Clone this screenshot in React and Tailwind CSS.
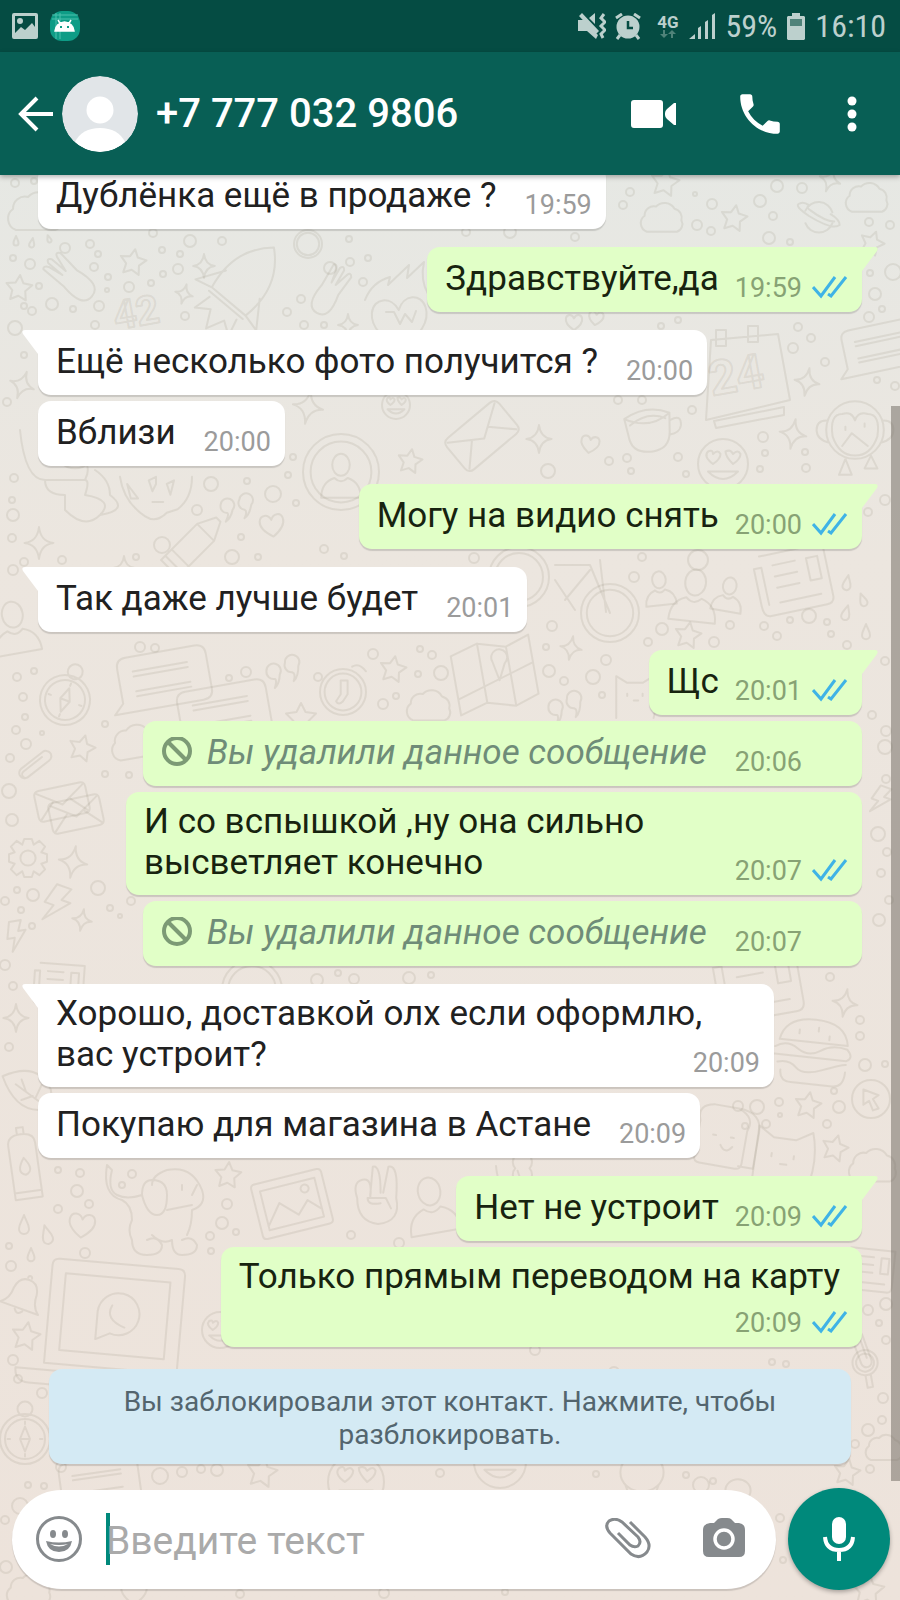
import React from 'react';
import clsx from 'clsx';

const MESSAGES = [
  { text: 'Дублёнка ещё в продаже ?', time: '19:59' },
  { text: 'Здравствуйте,да', time: '19:59', out: true, read: true, first: true },
  { text: 'Ещё несколько фото получится ?', time: '20:00', first: true },
  { text: 'Вблизи', time: '20:00' },
  { text: 'Могу на видио снять', time: '20:00', out: true, read: true, first: true },
  { text: 'Так даже лучше будет', time: '20:01', first: true },
  { text: 'Щс', time: '20:01', out: true, read: true, first: true },
  { text: 'Вы удалили данное сообщение', time: '20:06', out: true, deleted: true },
  { text: 'И со вспышкой ,ну она сильно высветляет конечно', time: '20:07', out: true, read: true, layout: 'two' },
  { text: 'Вы удалили данное сообщение', time: '20:07', out: true, deleted: true },
  { text: 'Хорошо, доставкой олх если оформлю, вас устроит?', time: '20:09', first: true, layout: 'float' },
  { text: 'Покупаю для магазина в Астане', time: '20:09' },
  { text: 'Нет не устроит', time: '20:09', out: true, read: true, first: true },
  { text: 'Только прямым переводом на карту', time: '20:09', out: true, read: true, layout: 'below' },
];

// Wallpaper doodles: [shape, x, y, size, rotation]
const DOODLES = [
  ['cloud', 37, 212, 30, 0], ['drop', 16, 241, 5, 0], ['drop', 32, 243, 5, 10], ['drop', 49, 239, 4, -20],
  ['star', 133, 262, 13, 10], ['star', 19, 288, 13, 5], ['sparkle', 204, 266, 12, 0], ['sparkle', 184, 294, 10, 15],
  ['sparkle', 348, 325, 11, 0], ['sparkle', 22, 385, 14, 20], ['sparkle', 308, 407, 17, 10], ['star', 410, 461, 12, 10],
  ['star', 665, 182, 14, 10], ['cloud', 663, 218, 23, 0], ['cloud', 868, 198, 23, 0], ['planet', 818, 216, 18, 0],
  ['star', 734, 218, 13, 10], ['star', 872, 243, 12, 20], ['sparkle', 830, 180, 12, 20], ['sparkle', 807, 382, 14, 10],
  ['sparkle', 539, 439, 14, 0], ['sparkle', 793, 434, 15, 10], ['face', 723, 464, 25, 0], ['chat', 878, 350, 42, -12],
  ['cup', 650, 430, 24, -8], ['heart', 590, 444, 10, 10], ['heart', 400, 322, 30, -6], ['heart', 272, 525, 13, -8],
  ['quotes', 236, 508, 17, 0], ['sparkle', 39, 543, 16, 0], ['crayon', 195, 543, 30, -45], ['sparkle', 124, 568, 12, 0],
  ['person', 15, 630, 26, -10], ['compass', 65, 700, 25, 20], ['chat', 160, 682, 50, -10], ['chat', 220, 716, 50, -10],
  ['quotes', 283, 672, 18, -10], ['clock', 343, 692, 23, 0], ['star', 393, 669, 13, 10], ['star', 301, 718, 15, 0],
  ['cloud', 430, 706, 24, 0], ['star', 82, 748, 13, 15], ['cloud', 136, 742, 26, -10], ['clip', 36, 764, 18, -38],
  ['mail', 62, 802, 26, -12], ['mail', 76, 814, 26, -12], ['gear', 28, 858, 19, 0], ['sparkle', 73, 862, 16, 10],
  ['sparkle', 82, 920, 11, 10], ['bolt', 16, 936, 15, -10], ['bolt', 56, 904, 19, 20], ['wheel', 610, 613, 29, 0],
  ['wheel', 519, 577, 30, 0], ['person', 694, 598, 26, 6], ['person', 660, 590, 17, -6], ['person', 728, 596, 17, 10],
  ['news', 795, 580, 38, -12], ['map', 495, 677, 40, -10], ['drop', 847, 583, 8, 10], ['drop', 863, 600, 7, -20],
  ['drop', 846, 613, 8, 15], ['drop', 866, 632, 8, 0], ['sparkle', 571, 648, 12, 10], ['star', 688, 635, 13, 10],
  ['quotes', 565, 708, 18, -10], ['bolt', 880, 800, 14, 20], ['cat', 636, 696, 22, 0], ['news', 60, 985, 26, 4],
  ['wheel', 252, 990, 30, 0], ['sparkle', 16, 1018, 14, 0], ['leaf', 28, 1090, 24, -20], ['bottle', 25, 1168, 34, -8],
  ['dog', 152, 1210, 50, 0], ['star', 228, 1175, 13, 5], ['photo', 292, 1204, 40, -14], ['hand', 378, 1198, 26, 0],
  ['person', 432, 1208, 28, -10], ['heart', 82, 1225, 14, 6], ['drop', 24, 1225, 10, 0], ['drop', 47, 1235, 10, -15],
  ['drop', 31, 1255, 7, 0], ['bell', 24, 1295, 20, 20], ['star', 26, 1336, 14, 10], ['laptop', 118, 1320, 70, 5],
  ['burger', 813, 1050, 38, 6], ['sparkle', 845, 1003, 14, 10], ['arrow', 871, 1099, 19, 0], ['star', 808, 1105, 13, 10],
  ['star', 835, 1148, 13, 15], ['cat', 784, 1158, 32, 8], ['cloud', 874, 1166, 26, 0], ['toast', 722, 1136, 30, 10],
  ['news', 870, 1270, 26, 6], ['news', 760, 982, 44, -10], ['face', 220, 1330, 18, 0], ['compass', 25, 1439, 25, 0],
  ['chat', 96, 1486, 44, -8], ['star', 262, 1472, 15, 10], ['face', 356, 1482, 28, 0], ['glass', 866, 1368, 18, -10],
  ['star', 847, 1472, 13, 10], ['cloud', 885, 1448, 20, 0], ['clip', 862, 1350, 18, 70], ['cloud', 30, 1590, 24, 0],
  ['face', 500, 1462, 26, 0], ['balloon', 642, 1482, 24, 0], ['balloon', 738, 1496, 14, 0], ['heart', 134, 1592, 14, 0],
  ['star', 868, 1590, 16, 5], ['fork', 70, 278, 26, -50], ['fork', 330, 290, 24, 30], ['wheel', 308, 244, 14, 0],
  ['rocket', 240, 288, 44, 40], ['wheel', 341, 472, 38, 0], ['person', 341, 478, 22, 0], ['monkey', 855, 430, 32, 0],
  ['teddy', 70, 480, 50, 0], ['cookie', 156, 484, 36, 0], ['mail', 482, 436, 34, -40], ['heart', 574, 322, 9, 0],
  ['heart', 596, 318, 8, 10], ['face', 396, 405, 14, 0], ['teddy', 520, 1190, 24, 0], ['bolt', 400, 1385, 12, 20],
];

// [x, y, r]
const DOTS = [
  [15, 183, 4], [34, 181, 3], [153, 233, 4], [190, 241, 6], [222, 241, 4], [65, 248, 5], [90, 244, 4], [13, 258, 3],
  [30, 264, 5], [98, 254, 3], [94, 267, 4], [162, 250, 3], [180, 254, 3], [178, 269, 5], [163, 274, 3], [108, 277, 3],
  [129, 287, 5], [151, 283, 3], [39, 286, 3], [107, 290, 2], [52, 304, 6], [73, 309, 3], [99, 306, 5], [24, 306, 3],
  [32, 311, 4], [95, 325, 4], [15, 328, 7], [185, 316, 4], [330, 268, 6], [350, 262, 4], [368, 258, 3], [363, 282, 4],
  [301, 299, 4], [287, 312, 4], [304, 325, 4], [324, 325, 3], [349, 239, 3], [24, 355, 3], [7, 402, 4], [14, 478, 4],
  [293, 457, 3], [288, 475, 3], [12, 500, 3], [13, 515, 6], [12, 538, 4], [24, 562, 4], [62, 560, 4], [211, 484, 7],
  [247, 481, 3], [197, 510, 5], [273, 494, 8], [296, 503, 3], [162, 545, 8], [136, 557, 3], [232, 557, 7],
  [241, 537, 3], [258, 557, 3], [324, 549, 4], [344, 556, 3], [630, 192, 4], [623, 205, 4], [695, 194, 2], [712, 204, 5],
  [760, 201, 6], [777, 186, 6], [802, 188, 5], [773, 216, 4], [697, 225, 5], [711, 231, 4], [769, 238, 6], [790, 242, 3],
  [869, 222, 4], [890, 225, 4], [510, 232, 6], [466, 232, 4], [575, 237, 4], [893, 272, 8], [875, 294, 6], [869, 317, 5],
  [882, 309, 3], [870, 273, 3], [661, 326, 3], [678, 320, 3], [798, 327, 4], [811, 338, 4], [793, 348, 5], [825, 362, 4],
  [895, 386, 4], [877, 380, 3], [692, 410, 4], [618, 400, 4], [642, 400, 4], [627, 458, 4], [609, 461, 4], [548, 471, 7],
  [631, 471, 3], [678, 457, 4], [686, 474, 3], [763, 437, 5], [765, 453, 3], [805, 452, 3], [806, 468, 4], [760, 469, 3],
  [885, 500, 5], [868, 512, 4], [642, 557, 4], [698, 560, 10], [474, 558, 5], [13, 570, 5], [140, 647, 5], [155, 648, 4],
  [17, 677, 4], [34, 671, 3], [23, 697, 4], [25, 717, 3], [16, 730, 4], [26, 744, 5], [42, 733, 2], [10, 758, 4],
  [105, 724, 3], [105, 774, 3], [129, 775, 3], [9, 791, 7], [12, 820, 6], [229, 678, 3], [246, 672, 5], [373, 654, 5],
  [420, 649, 3], [432, 655, 4], [418, 674, 3], [441, 673, 7], [383, 704, 5], [396, 696, 3], [318, 677, 4], [552, 626, 5],
  [662, 629, 6], [648, 642, 4], [714, 642, 5], [730, 625, 4], [764, 626, 4], [790, 620, 3], [777, 636, 4], [809, 616, 7],
  [827, 622, 3], [831, 634, 3], [847, 645, 4], [546, 647, 3], [606, 660, 5], [549, 671, 6], [564, 681, 4], [593, 677, 7],
  [602, 695, 3], [634, 577, 5], [885, 661, 4], [872, 715, 4], [886, 731, 5], [885, 747, 7], [886, 779, 4], [878, 834, 7],
  [887, 852, 4], [881, 873, 4], [889, 900, 4], [879, 920, 6], [17, 890, 3], [33, 895, 6], [5, 901, 4], [21, 910, 3],
  [32, 926, 3], [98, 888, 7], [110, 908, 3], [131, 901, 4], [120, 916, 2], [13, 986, 4], [5, 965, 5], [317, 980, 6],
  [338, 973, 3], [354, 979, 5], [409, 978, 6], [431, 975, 3], [9, 1047, 4], [58, 1170, 3], [80, 1173, 4], [77, 1191, 6],
  [58, 1209, 4], [89, 1204, 4], [132, 1174, 4], [122, 1185, 3], [227, 1204, 5], [222, 1223, 6], [236, 1232, 3],
  [210, 1236, 4], [211, 1251, 3], [85, 1253, 5], [9, 1246, 3], [11, 1266, 5], [351, 1235, 4], [399, 1243, 5],
  [13, 1360, 5], [18, 1379, 4], [42, 1393, 5], [830, 977, 4], [860, 1020, 4], [860, 1036, 4], [865, 1065, 6],
  [885, 1064, 3], [738, 1106, 5], [757, 1107, 7], [779, 1102, 4], [780, 1115, 2], [834, 1091, 3], [839, 1107, 6],
  [745, 1126, 3], [766, 1124, 4], [827, 1124, 4], [868, 1310, 5], [879, 1323, 3], [886, 1304, 6], [886, 1340, 4],
  [160, 1476, 8], [182, 1472, 5], [201, 1469, 4], [217, 1470, 6], [440, 1473, 4], [28, 1485, 3], [44, 1486, 3],
  [61, 1467, 5], [5, 1520, 4], [6, 1567, 6], [20, 1506, 8], [596, 1474, 3], [686, 1475, 3], [701, 1485, 8], [713, 1481, 3],
  [870, 1469, 4], [882, 1420, 4], [868, 1430, 6], [883, 1398, 5], [855, 1444, 4], [780, 1518, 4], [783, 1560, 3],
  [240, 1594, 4], [384, 1593, 5], [505, 1592, 3], [614, 1372, 5], [535, 1350, 5], [772, 1362, 3], [786, 1364, 3],
];

const SHAPES = {
  star: 'M0-10 3-4 10-3 5 2 6 9 0 6-6 9-5 2-10-3-3-4Z',
  sparkle: 'M0-10Q1-1 9 0 1 1 0 10-1 1-9 0-1-1 0-10Z',
  drop: 'M0-10C2-4 5-1 5 4A5 5 0 0 1-5 4C-5-1-2-4 0-10Z',
  cloud: 'M-7 6A4 4 0 0 1-8-1 4 4 0 0 1-3-5 5 5 0 0 1 5-4 4 4 0 0 1 8 1 3.500 3.500 0 0 1 6 6Z',
  heart: 'M0 9C-6 5-10 1-9-4-8-9-2-9 0-4 2-9 8-9 9-4 10 1 6 5 0 9Z',
  bolt: 'M-3-10H5L2-3H7L-4 10-1 1H-6Z',
  chat: 'M-10 5 -8 3V-4Q-8-6-6-6H8Q10-6 10-4V3Q10 5 8 5ZM-5-3H6M-5 2H6M-5-2H6M-5 1H6',
  quotes: 'M-9-2A4 4 0 1 1-2 1Q-3 6-6 8-4 4-5 3A4 4 0 0 1-9-2ZM2-5A4 4 0 1 1 9-2Q8 4 5 6 7 2 5 1A4 4 0 0 1 2-5Z',
  planet: 'M-7-3A8 8 0 0 1 8-2M8 4A8 8 0 0 1-7 4M-10-7Q-14-6-5 0 8 8 12 5 12 2 7-1M-10-7Q-8-8-5-6-7-5-4-3 4 3 9 3',
  face: 'M10 0A10 10 0 1 1-10 0 10 10 0 1 1 10 0ZM-6 3Q0 9 6 3ZM-4 0Q-8-3-6-5-4-6-4-4-2-6-1-4-1-2-4 0ZM4 0Q1-3 1-5 3-6 4-4 6-6 7-4 7-2 4 0Z',
  cup: 'M-10-6Q0-11 9-6L8 2Q7 9 0 9-8 9-9 3ZM9-3Q14-5 13 0 12 3 8 3M-10-6Q0 0 9-6M-8-3Q0-8 7-4',
  crayon: 'M-10-4H5L11-1V1L5 4H-10ZM-7-4V4M5-4V4M-12-4H-10V4H-12Z',
  person: 'M4-6A4 5 0 1 1-4-6 4 5 0 1 1 4-6ZM-3 0Q-9 2-9 9H9Q9 2 3 0Q0 3-3 0Z',
  compass: 'M10 0A10 10 0 1 1-10 0 10 10 0 1 1 10 0ZM8 0A8 8 0 1 1-8 0 8 8 0 1 1 8 0ZM0-5 2 0 0 5-2 0ZM-2 0H2M3-12A3 3 0 1 1-3-12 3 3 0 1 1 3-12ZM0-7V-6M0 6V7M-7 0H-6M6 0H7',
  clock: 'M10 0A10 10 0 1 1-10 0 10 10 0 1 1 10 0ZM8 0A8 8 0 1 1-8 0 8 8 0 1 1 8 0ZM-1-5V1L-3 4Q-2 6 0 4L2 1V-5ZM4-11Q7-13 10-9',
  clip: 'M-8-3H7A3 3 0 0 1 7 3H-8A2 2 0 0 1-8-1H5M-8-3A3 3 0 0 0-8 3',
  mail: 'M-8-6H8Q10-6 10-4V4Q10 6 8 6H-8Q-10 6-10 4V-4Q-10-6-8-6ZM-9-5 0 1 9-5M-9 5-3-1M9 5 3-1',
  gear: 'M-2-10H2L3-7 6-9 9-6 7-3 10-2V2L7 3 9 6 6 9 3 7 2 10H-2L-3 7-6 9-9 6-7 3-10 2V-2L-7-3-9-6-6-9-3-7ZM4 0A4 4 0 1 1-4 0 4 4 0 1 1 4 0Z',
  wheel: 'M10 0A10 10 0 1 1-10 0 10 10 0 1 1 10 0ZM8 0A8 8 0 1 1-8 0 8 8 0 1 1 8 0Z',
  news: 'M-8-8H9V6Q9 8 7 8H-8Q-10 8-10 5V-5H-8V5M-5-5H1M-5-2H1M-5 1H1M4-5H7V1H4ZM-5 5H6',
  map: 'M-10-7-3-9 4-7 10-9V6L4 8-3 6-10 8ZM-3-9V6M4-7V8M-10 4 10-2M0-4A2 2 0 1 1 3-3L1 1Z',
  cat: 'M-9 10V-9L-4-6H3L8-9Q11 0 8 10M-4-1V0M3-1V0M-1 2H1',
  leaf: 'M-8-9Q8-10 9 3 8 9 4 10-8 8-8-9ZM-4-4 4 8M-1 0V-5M1 3H-4M2 4 6 0',
  bottle: 'M-4-7Q-4-10 0-10T4-7V9H-4ZM-4 7H4M-1-10V-12H1V-10M0-3Q3 1 0 2-3 1 0-3Z',
  dog: 'M-9-9Q-10-3-6-2-4-1-4 2-5 4-4 6-4 9-1 9 2 9 2 7 1 5-1 6M0 5Q2 7 4 6 4 9 6 9 9 9 9 7 8 5 6 6M7 5Q8 3 8 0M-9-9-8-8Q-9-4-7-3-5-2-2-3M8 0Q11-1 10-4 8-9 3-8 0-7 0-5M-2-3Q-2-6 0-6 3-6 3-3 3 1 1 1-1 1-2-3ZM3 0 8-1M6-5V-4M9-5 8-3',
  photo: 'M-8-7H8Q9-7 9-6V6Q9 7 8 7H-8Q-9 7-9 6V-6Q-9-7-8-7ZM-7-5H7V5H-7ZM-7 4-3-1 1 3 4 0 7 3M5-3A1 1 0 1 1 3-3 1 1 0 1 1 5-3Z',
  hand: 'M-8 0Q-10-6-6-7T-3 0M-3-1-2-12Q1-13 1-2M2-2 4-12Q8-13 7 0 9 9 0 10-8 9-8 0M-4 0H3L5 4M-4 0Q-4 3 1 2',
  bell: 'M-10 7Q-6 4-6-2 -5-8 0-8T6-2Q6 4 10 7ZM-2 8Q0 11 2 8M-1-9A1 1 0 1 1 1-9',
  laptop: 'M-9-8H8Q9-8 9-7V7H-10V-7Q-10-8-9-8ZM-8-6H7V5H-8ZM-3-1A3 3 0 1 1-1 2L-3 3ZM-1-2Q-2 0 1 1M-14 8H12Q12 10 10 10H-12Q-14 10-14 8Z',
  burger: 'M-9-2Q-8-8 0-8T9-2ZM-10 0Q-7-2-4 0T2 0 9-1M-10 2H9Q11 1 9-1M-9 4Q-6 3-4 5T3 5 9 3M-8 6Q-8 9-5 9H6Q9 9 9 5M-4-5V-4M1-6V-5M4-4V-3',
  arrow: 'M10 0A10 10 0 1 1-10 0 10 10 0 1 1 10 0ZM-4-5 4-2 1 0 4 5 1 6-1 1-4 3Z',
  toast: 'M-8 8V-4Q-10-9-4-10H4Q10-8 8-3V8Q8 10 6 10H-6Q-8 10-8 8ZM4-10Q12-10 12-3V9H7M-3 0H-2M3 0H4M0 3Q2 6 4 3',
  glass: 'M7-3A7 7 0 1 1-7-3 7 7 0 1 1 7-3ZM5-3A5 5 0 1 1-5-3 5 5 0 1 1 5-3ZM-1 4V11H2V4',
  balloon: 'M9-4A9 8 0 1 1-9-4 9 8 0 1 1 9-4ZM-7 1-3 12H3L7 1M-3 4-1 12',
  fork: 'M-4-10Q-3-11-2-9L-1-3V-10Q0-12 1-10V-3L3-9Q4-11 5-9L4 0Q6 11 0 11T-4 0Z',
  rocket: 'M0-12Q7-6 5 4H-5Q-7-6 0-12ZM-5-1-9 5-5 4M5-1 9 5 5 4M-5 5H5M-4 6-5 10-2 8 0 12 2 8 5 10 4 6',
  monkey: 'M9 0A9 9 0 1 1-9 0 9 9 0 1 1 9 0ZM-7 2Q-8-5-4-5-1-6 0-3 1-6 4-5 8-5 7 2 5 8 0 8T-7 2ZM-9-3Q-12-3-12 0T-8 4M9-3Q12-3 12 0T8 4M-3-1V0M3-2V-1M-4 5-1 1 4 5M-3 9-5 14H-1ZM5 8 3 12 7 12Z',
  teddy: 'M-10-10Q-9 0-5 0H3Q5-4 0-5L-1-8M-5 0Q-5 3-1 3V6Q3 10 6 7T3 3Q4 0 3 0M5-2Q8 0 8 3 12 6 6 7M4-9A4 4 0 1 1-2-9 4 4 0 1 1 4-9Z',
  cookie: 'M10-2Q10 4 6 7L3 8Q0 11-3 9-9 5-10-2M-8 0-5 4-7 4ZM-2-1 0-2V0L-1 2ZM3 0 5-1 4 3ZM-1 5H2',
};

const Wallpaper = () => (
  <svg
    aria-hidden="true"
    className="absolute inset-0 h-full w-full"
    viewBox="0 0 900 1600"
    preserveAspectRatio="xMidYMin slice"
    fill="none"
    stroke="#8a7f6c"
    strokeOpacity="0.14"
    strokeWidth="2"
    strokeLinejoin="round"
    strokeLinecap="round"
  >
    {DOODLES.map(([shape, x, y, size, rot], i) => (
      <path
        key={i}
        d={SHAPES[shape]}
        transform={`translate(${x} ${y}) rotate(${rot}) scale(${size / 10})`}
        vectorEffect="non-scaling-stroke"
      />
    ))}
    {DOTS.map(([x, y, r], i) => (
      <circle key={i} cx={x} cy={y} r={r} />
    ))}
    <path d="M711 340 778 334 790 400 706 420ZM714 421 784 407V415L716 428ZM716 330H726V346H716ZM748 326H758V342H748Z" />
    <path d="M386 312H394L400 324 405 314 412 322 416 311M365 300Q372 282 390 277L388 285 409 265 407 278 424 262Q420 280 428 294" />
    <path d="M555 580 575 610M555 565 590 565 610 613M600 560 606 612M590 570 565 600" />
    <text x="116" y="330" fontSize="40" fontWeight="bold" transform="rotate(-10 116 330)">42</text>
    <text x="712" y="396" fontSize="48" fontWeight="bold" transform="rotate(-10 712 396)">24</text>
  </svg>
);

const Ticks = () => (
  <svg viewBox="0 0 36 24" className="mb-1 h-6 w-9 shrink-0" role="img" aria-label="Прочитано" fill="none" stroke="#3fb3e6" strokeWidth="3">
    <path d="M1 12 9 21 23 2" />
    <path d="M16 19 19 21 34 2" />
  </svg>
);

const Tail = ({ out }) => (
  <svg
    aria-hidden="true"
    viewBox="0 0 17 26"
    className={clsx('absolute top-0 h-[26px] w-[17px]', out ? '-right-4 -scale-x-100 text-[#e1ffc7]' : '-left-4 text-white')}
  >
    <path d="M17 0H3Q-1 0 1 4L16 24Q17 25 17 26Z" fill="currentColor" />
  </svg>
);

const Meta = ({ time, out, read }) => (
  <div className={clsx('flex shrink-0 items-end gap-[10px] pb-[9px] text-[27px] leading-[30px]', out ? 'text-[#87a274]' : 'text-[#9b9b9b]')}>
    <time>{time}</time>
    {read && <Ticks />}
    {out && !read && <span className="w-9" />}
  </div>
);

const BubbleBody = ({ text, deleted, layout, ...meta }) => {
  // The time floats into the free end of the last line
  if (layout === 'float') {
    return (
      <div className="flow-root w-full pt-[9px]">
        <span>{text}</span>
        <div className="float-right mt-[14px]">
          <Meta {...meta} />
        </div>
      </div>
    );
  }

  if (deleted) {
    return (
      <>
        <p className="flex items-center gap-[14px] pt-[11px] pb-[13px] italic text-[#6f8c78]">
          <svg viewBox="0 0 32 32" className="h-8 w-8 shrink-0" aria-hidden="true" fill="none" stroke="#7c9a75" strokeWidth="4">
            <circle cx="16" cy="14" r="13" />
            <path d="M7 5 25 23" />
          </svg>
          {text}
        </p>
        <Meta {...meta} />
      </>
    );
  }

  return (
    <>
      <p
        className={clsx(
          !layout && 'pt-[11px] pb-[13px]',
          layout === 'two' && 'pt-[9px] pb-3',
          layout === 'below' && 'pt-[9px] pr-2 pb-[11px]'
        )}
      >
        {text}
      </p>
      <Meta {...meta} />
    </>
  );
};

const Bubble = ({ first, ...message }) => {
  const { out, deleted, layout } = message;
  return (
    <li
      className={clsx(
        'relative flex max-w-[736px] items-end rounded-[13px] pr-[14px] pl-[18px] text-[35px] leading-[41px] shadow-[0_2px_1px_rgba(0,0,0,0.14)]',
        out ? 'self-end bg-[#e1ffc7] text-[#17230f]' : 'self-start bg-white text-[#212121]',
        first ? 'mt-[18px]' : 'mt-[6px]',
        first && (out ? 'rounded-tr-none' : 'rounded-tl-none'),
        layout === 'below' ? 'flex-col' : out && !deleted ? 'gap-4' : 'gap-7'
      )}
    >
      {first && <Tail out={out} />}
      <BubbleBody {...message} />
    </li>
  );
};

const StatusBar = () => (
  <div className="relative flex h-[52px] items-center bg-[#054c43] pr-[14px] pl-3 text-[#bcd0cd]">
    <svg viewBox="0 0 26 26" className="h-[26px] w-[26px]" aria-hidden="true">
      <path fillRule="evenodd" fill="currentColor" d="M2 0H24Q26 0 26 2V24Q26 26 24 26H2Q0 26 0 24V2Q0 0 2 0ZM3 3V20L9 14 13 17 20 10 23 14V3ZM8 5A3 3 0 1 1 8 11 3 3 0 1 1 8 5Z" />
    </svg>
    <svg viewBox="0 0 30 30" className="ml-3 h-[30px] w-[30px]" aria-hidden="true">
      <rect width="30" height="30" rx="12" fill="#0e9c86" />
      <path d="M2 4H28M2 8H28M6 2V28M10 2V28" stroke="#4dc0ad" strokeWidth="1" />
      <path d="M5 20Q6 12 14.500 11 23 12 24 20ZM8 9 11 14M21 9 18 14" fill="#fff" stroke="#fff" strokeWidth="1.500" />
      <path d="M10 15H12V17H10ZM17 15H19V17H17Z" fill="#0e9c86" />
    </svg>
    <div className="ml-auto flex items-center">
      <svg viewBox="0 0 28 26" className="h-[26px] w-7" aria-hidden="true" fill="currentColor">
        <path d="M0 7H5L20 22 18 26 9 18H0ZM11 5 17 0V11ZM1 3 4 0 21 18 18 21Z" />
        <path d="M26 1 23 5 27 9 23 13 27 17 23 21 25 25" fill="none" stroke="currentColor" strokeWidth="3" />
      </svg>
      <svg viewBox="0 0 26 27" className="ml-[9px] h-[27px] w-[26px]" aria-hidden="true">
        <circle cx="13" cy="14" r="11.500" fill="currentColor" />
        <path d="M1 5 7 1M25 5 19 1M5 22 2 26M21 22 24 26" stroke="currentColor" strokeWidth="3" />
        <path d="M13 8V15H18" fill="none" stroke="#054c43" strokeWidth="2.500" />
      </svg>
      <div className="ml-4 flex flex-col items-center">
        <span className="text-[17px] leading-4 font-bold">4G</span>
        <svg viewBox="0 0 16 8" className="h-2 w-4" aria-hidden="true" fill="#4f8279">
          <path d="M3 0H5V4H8L4 8 0 4H3ZM11 8H13V4H16L12 0 8 4H11Z" />
        </svg>
      </div>
      <svg viewBox="0 0 27 26" className="ml-[10px] h-[26px] w-[27px]" aria-hidden="true" fill="currentColor">
        <path d="M0 26 6 21V26ZM9 15 12 13V26H9ZM16 9 19 7V26H16ZM23 2 26 0V26H23Z" />
      </svg>
      <span className="ml-[10px] font-['Roboto_Condensed','Liberation_Sans_Narrow',Roboto,sans-serif] text-[32px] leading-[38px]">59%</span>
      <svg viewBox="0 0 18 27" className="ml-[10px] h-[27px] w-[18px]" aria-hidden="true">
        <path d="M5 0H13V3H17L18 4V26L17 27H1L0 26V4L1 3H5Z" fill="currentColor" />
        <path d="M3 6H15V13H3Z" fill="#4f8279" />
      </svg>
      <span className="ml-[10px] font-['Roboto_Condensed','Liberation_Sans_Narrow',Roboto,sans-serif] text-[32px] leading-[38px]">16:10</span>
    </div>
  </div>
);

const ChatHeader = () => (
  <header className="relative z-10 flex h-[123px] items-center bg-[#085f55] pr-[38px] pl-[17px] text-white shadow-[0_2px_5px_rgba(0,0,0,0.3)]">
    <button type="button" aria-label="Назад">
      <svg viewBox="0 0 38 36" className="h-9 w-[38px]" fill="none" stroke="currentColor" strokeWidth="4">
        <path d="M36 18H4M20 2 4 18 20 34" />
      </svg>
    </button>
    <svg viewBox="0 0 76 76" className="ml-[7px] h-[76px] w-[76px] rounded-full" role="img" aria-label="Фото контакта">
      <circle cx="38" cy="38" r="38" fill="#e1e5e8" />
      <circle cx="38" cy="34" r="13.500" fill="#fff" />
      <path d="M13 66Q20 52 38 52T63 66Q52 76 38 76T13 66Z" fill="#fff" />
    </svg>
    <h1 className="ml-[18px] text-[40px] leading-[48px] font-medium whitespace-nowrap">+7 777 032 9806</h1>
    <div className="ml-auto flex items-center gap-[60px]">
      <button type="button" aria-label="Видеозвонок">
        <svg viewBox="0 0 48 28" className="h-7 w-12" fill="currentColor">
          <path d="M4 0H30Q33 0 33 3V25Q33 28 30 28H4Q1 28 1 25V3Q1 0 4 0ZM35 13Q35 11 37 9L44 3H46V25H44L37 19Q35 17 35 15Z" />
        </svg>
      </button>
      <button type="button" aria-label="Позвонить">
        <svg viewBox="2 2 20 20" className="h-11 w-11" fill="currentColor">
          <path d="M6.620 10.790c1.440 2.830 3.760 5.140 6.590 6.590l2.200-2.200c.27-.27.67-.36 1.020-.24 1.120.37 2.330.57 3.570.57.55 0 1 .45 1 1V20c0 .55-.45 1-1 1-9.390 0-17-7.610-17-17 0-.55.45-1 1-1h3.500c.55 0 1 .45 1 1 0 1.250.2 2.450.57 3.570.11.35.03.74-.25 1.020l-2.200 2.200z" />
        </svg>
      </button>
      <button type="button" aria-label="Ещё">
        <svg viewBox="0 0 20 38" className="h-[38px] w-5" fill="currentColor">
          <circle cx="10" cy="6" r="4.500" />
          <circle cx="10" cy="19" r="4.500" />
          <circle cx="10" cy="32" r="4.500" />
        </svg>
      </button>
    </div>
  </header>
);

const Composer = () => (
  <form className="relative flex items-center gap-3 pt-[7px] pr-[10px] pb-[10px] pl-3" onSubmit={(e) => e.preventDefault()}>
    <div className="flex h-[99px] min-w-0 flex-1 items-center rounded-full bg-white pr-[30px] pl-[23px] shadow-[0_2px_1px_rgba(0,0,0,0.14)]">
      <button type="button" aria-label="Эмодзи" className="shrink-0 text-[#868a8d]">
        <svg viewBox="0 0 48 48" className="h-12 w-12">
          <circle cx="24" cy="24" r="21.500" fill="none" stroke="currentColor" strokeWidth="3" />
          <ellipse cx="18" cy="19" rx="3" ry="4" fill="currentColor" />
          <ellipse cx="30" cy="19" rx="3" ry="4" fill="currentColor" />
          <path fillRule="evenodd" d="M11 26Q24 29 37 26 35 37 24 37T11 26ZM15 29Q24 34 33 29 24 31 15 29Z" fill="currentColor" />
        </svg>
      </button>
      <span className="ml-[23px] h-[52px] w-1 shrink-0 bg-[#00897b]" />
      <input
        type="text"
        aria-label="Введите текст"
        placeholder="Введите текст"
        className="-ml-1 h-[60px] min-w-0 flex-1 bg-transparent pt-1 text-[39px] text-[#212121] outline-none placeholder:text-[#aaaaaa]"
      />
      <button type="button" aria-label="Прикрепить" className="shrink-0 text-[#868a8d]">
        <svg viewBox="0 0 46 42" className="h-[42px] w-[46px]" fill="none" stroke="currentColor" strokeWidth="3" strokeLinecap="butt">
          <path d="M25 4 40 19Q47 27 42 34 35 42 26 36L5 15Q-1 8 4 3 10-1 17 4L33 19Q37 24 33 28 29 30 25 27L13 15" />
        </svg>
      </button>
      <button type="button" aria-label="Камера" className="ml-[51px] shrink-0">
        <svg viewBox="0 0 44 44" className="h-11 w-11">
          <path d="M8 6H12L16 2Q18 1 20 1H25Q28 1 29 2L33 6H37Q43 7 43 13V34Q43 40 37 40H7Q1 40 1 34V13Q1 7 8 6Z" fill="#868a8d" />
          <circle cx="22" cy="22" r="9" fill="none" stroke="#fff" strokeWidth="3.500" />
        </svg>
      </button>
    </div>
    <button type="button" aria-label="Голосовое сообщение" className="flex h-[102px] w-[102px] shrink-0 items-center justify-center rounded-full bg-[#00897b] text-white shadow-[0_2px_4px_rgba(0,0,0,0.3)]">
      <svg viewBox="0 0 34 46" className="h-[46px] w-[34px]">
        <rect x="10" y="1" width="14" height="27" rx="7" fill="currentColor" />
        <path d="M3 21Q4 34 17 34T31 21M17 34V45" fill="none" stroke="currentColor" strokeWidth="4" />
      </svg>
    </button>
  </form>
);

const App = () => (
  <div className="relative flex min-h-screen flex-col overflow-hidden bg-gradient-to-b from-[#e6e8e4] from-10% via-[#ece6df] via-35% to-[#ede3db] font-[Roboto,sans-serif]">
    <Wallpaper />
    <StatusBar />
    <ChatHeader />
    <main className="relative flex-1 pb-4">
      <ul className="-mt-[17px] flex flex-col px-[38px]">
        {MESSAGES.map((message, i) => (
          <Bubble key={i} {...message} />
        ))}
      </ul>
      <button
        type="button"
        className="mx-[49px] mt-[22px] block rounded-[13px] bg-[#d4eaf4] px-10 pt-4 pb-[13px] text-center text-[28px] leading-[33px] text-[#53656e] shadow-[0_2px_1px_rgba(0,0,0,0.14)]"
      >
        Вы заблокировали этот контакт. Нажмите, чтобы разблокировать.
      </button>
      {/* Scroll thumb */}
      <div className="absolute top-[231px] right-0 bottom-0 w-[9px] bg-[#6b665e]/50" />
    </main>
    <Composer />
  </div>
);

export default App;
